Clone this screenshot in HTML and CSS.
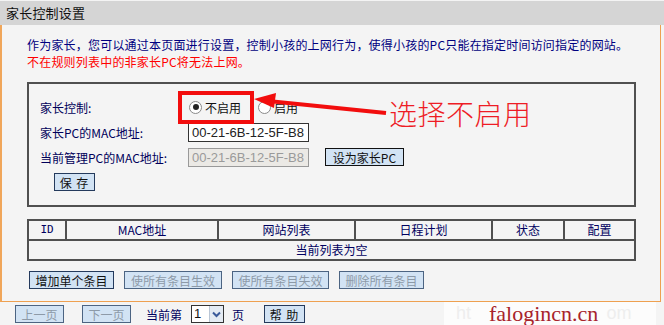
FILE: index.html
```html
<!DOCTYPE html>
<html>
<head>
	<meta charset="UTF-8">
	<title>家长控制设置</title>
	<link rel="stylesheet" href="styles.css">
</head>
<body>
	<div class="page">
		<div class="title">家长控制设置</div>

		<div class="panel">
			<p class="intro">作为家长，您可以通过本页面进行设置，控制小孩的上网行为，使得小孩的PC只能在指定时间访问指定的网站。</p>
			<p class="warn">不在规则列表中的非家长PC将无法上网。</p>

			<div class="box">
				<div class="row row1">
					<span class="label">家长控制:</span>
					<span class="radio checked"></span><span class="opt">不启用</span>
					<span class="radio second"></span><span class="opt">启用</span>
				</div>
				<div class="row row2">
					<span class="label">家长PC的MAC地址:</span>
					<span class="input">00-21-6B-12-5F-B8</span>
				</div>
				<div class="row row3">
					<span class="label">当前管理PC的MAC地址:</span>
					<span class="input disabled">00-21-6B-12-5F-B8</span>
					<span class="btn btn-set">设为家长PC</span>
				</div>
				<div class="save-row">
					<span class="btn btn-save">保 存</span>
				</div>
			</div>

			<table class="rules">
				<tr>
					<th class="c-id">ID</th>
					<th class="c-mac">MAC地址</th>
					<th class="c-site">网站列表</th>
					<th class="c-plan">日程计划</th>
					<th class="c-state">状态</th>
					<th class="c-conf">配置</th>
				</tr>
				<tr>
					<td colspan="6">当前列表为空</td>
				</tr>
			</table>

			<div class="actions">
				<span class="btn w85">增加单个条目</span>
				<span class="btn off w98">使所有条目生效</span>
				<span class="btn off w97">使所有条目失效</span>
				<span class="btn off w85">删除所有条目</span>
			</div>
		</div>

		<div class="footer">
			<span class="btn off pg">上一页</span>
			<span class="btn off pg next">下一页</span>
			<span class="cur">当前第</span>
			<span class="select"><span class="sel-val">1</span><span class="sel-arrow"><svg width="9" height="7" viewBox="0 0 9 7"><path d="M1 1.5 L4.5 5 L8 1.5" fill="none" stroke="#3a5a9a" stroke-width="2"/></svg></span></span>
			<span class="cur unit">页</span>
			<span class="btn help">帮 助</span>
		</div>

		<!-- annotation drawn over the screenshot -->
		<svg class="mark" width="664" height="325" viewBox="0 0 664 325">
			<rect x="180" y="93" width="72" height="29" fill="none" stroke="#f20d0d" stroke-width="4"/>
			<line x1="386" y1="113" x2="268" y2="101" stroke="#f20d0d" stroke-width="4"/>
			<polygon points="254,99 276,93 274,108" fill="#f20d0d"/>
		</svg>
		<div class="note">选择不启用</div>

		<div class="wm"><span class="wm-l">ht</span><span class="wm-t">falogincn.cn</span><span class="wm-r">om</span></div>
	</div>
</body>
</html>
```

FILE: styles.css
```css
body {
	margin: 0;
	background: #f4f4f4;
	font-family: "Noto Sans CJK SC", "Liberation Sans", sans-serif;
	font-size: 12px;
	color: #00005a;
}

p {
	margin: 0;
}

.page {
	position: relative;
	width: 664px;
	height: 325px;
	overflow: hidden;
}

.title {
	height: 24px;
	margin-top: 1px;
	padding-left: 6px;
	line-height: 24px;
	font-size: 13px;
	letter-spacing: 0.2px;
	color: #111;
	background: #d5d5d5;
}

.panel {
	width: 609px;
	padding: 11px 24px 12px 25px;
	border-left: 2px solid #f0a65a;
	border-right: 1px solid #eea050;
	border-bottom: 1px solid #eea050;
	background: #f4f4f4;
}

.intro,
.warn {
	line-height: 17px;
	letter-spacing: 0.2px;
}

.intro {
	color: #000080;
}

.warn {
	color: #f00;
}

.box {
	margin-top: 12px;
	border: 2px solid #505050;
	padding: 10px 11px 0;
	box-sizing: border-box;
	height: 125px;
}

.row {
	display: flex;
	align-items: center;
}

.row1 {
	height: 26px;
}

.row2 {
	height: 25px;
}

.row3 {
	height: 24px;
}

.label {
	width: 148px;
	flex: none;
}

.radio {
	width: 11px;
	height: 11px;
	border: 1px solid #8a8a8a;
	border-radius: 50%;
	background: #fff;
	display: flex;
	align-items: center;
	justify-content: center;
	margin-right: 3px;
	margin-left: 1px;
}

.radio.checked::after {
	content: "";
	width: 6px;
	height: 6px;
	border-radius: 50%;
	background: #222;
}

.radio.second {
	margin-left: 17px;
}

.opt {
	color: #111;
}

.input {
	width: 116px;
	height: 17px;
	padding-left: 3px;
	border: 1px solid #333;
	background: #fff;
	font-family: "Liberation Sans", sans-serif;
	font-size: 13px;
	line-height: 17px;
	color: #222;
}

.input.disabled {
	border-color: #999;
	background: #ebe9e5;
	color: #9a9a9a;
}

.btn {
	display: inline-flex;
	align-items: center;
	justify-content: center;
	height: 16px;
	border: 1px solid #243a5c;
	background: #d2e3f4;
	color: #111;
	font-size: 12px;
	box-sizing: content-box;
}

.btn.off {
	color: #8d9aa8;
	border-color: #4c6482;
}

.btn-set {
	width: 77px;
	margin-left: 16px;
	border-color: #111;
}

.save-row {
	margin-top: 4px;
	padding-left: 14px;
}

.btn-save {
	width: 39px;
	letter-spacing: 1px;
}

.rules {
	margin-top: 12px;
	width: 609px;
	border-collapse: collapse;
	table-layout: fixed;
	border: 2px solid #505050;
}

.rules th,
.rules td {
	height: 18px;
	padding: 0;
	border: 2px solid #505050;
	font-weight: normal;
	text-align: center;
	line-height: 16px;
	color: #000060;
}

.c-id {
	width: 36px;
	font-family: "DejaVu Sans Mono", monospace;
	font-size: 11px;
}

.c-mac {
	width: 150px;
}

.c-site {
	width: 135px;
}

.c-plan {
	width: 135px;
}

.c-state {
	width: 70px;
}

.actions {
	display: flex;
	gap: 10px;
	margin-top: 10px;
	padding-left: 2px;
}

.w85 {
	width: 83px;
}

.w98 {
	width: 96px;
}

.w97 {
	width: 95px;
}

.footer {
	display: flex;
	align-items: center;
	padding: 3px 0 0 15px;
}

.pg {
	width: 47px;
}

.next {
	margin-left: 18px;
}

.cur {
	margin-left: 15px;
	color: #000060;
}

.select {
	display: flex;
	margin-left: 9px;
	width: 31px;
	height: 16px;
	border: 1px solid #333;
	background: #fff;
}

.sel-val {
	width: 15px;
	padding-left: 2px;
	font-family: "Liberation Sans", sans-serif;
	font-size: 13px;
	line-height: 16px;
	color: #111;
}

.sel-arrow {
	flex: 1;
	display: flex;
	align-items: center;
	justify-content: center;
	background: #e4ebf3;
	border-left: 1px solid #b9c6d6;
}

.cur.unit {
	margin-left: 8px;
}

.help {
	width: 39px;
	margin-left: 20px;
	letter-spacing: 1px;
}

.mark {
	position: absolute;
	left: 0;
	top: 0;
	pointer-events: none;
}

.note {
	position: absolute;
	left: 389px;
	top: 97px;
	font-size: 28px;
	line-height: 32px;
	font-weight: 300;
	letter-spacing: 0.5px;
	color: #ee1c25;
}

.wm {
	position: absolute;
	left: 444px;
	top: 302px;
	width: 212px;
	height: 23px;
	display: flex;
	align-items: center;
	background: rgba(255, 255, 255, 0.7);
	font-family: "Liberation Serif", serif;
}

.wm-l,
.wm-r {
	font-family: "Liberation Sans", sans-serif;
	font-size: 18px;
	color: #eeeeee;
}

.wm-l {
	margin-left: 12px;
}

.wm-t {
	margin-left: 18px;
	font-size: 22px;
	line-height: 25px;
	color: #a8232b;
}

.wm-r {
	margin-left: 8px;
}
```
